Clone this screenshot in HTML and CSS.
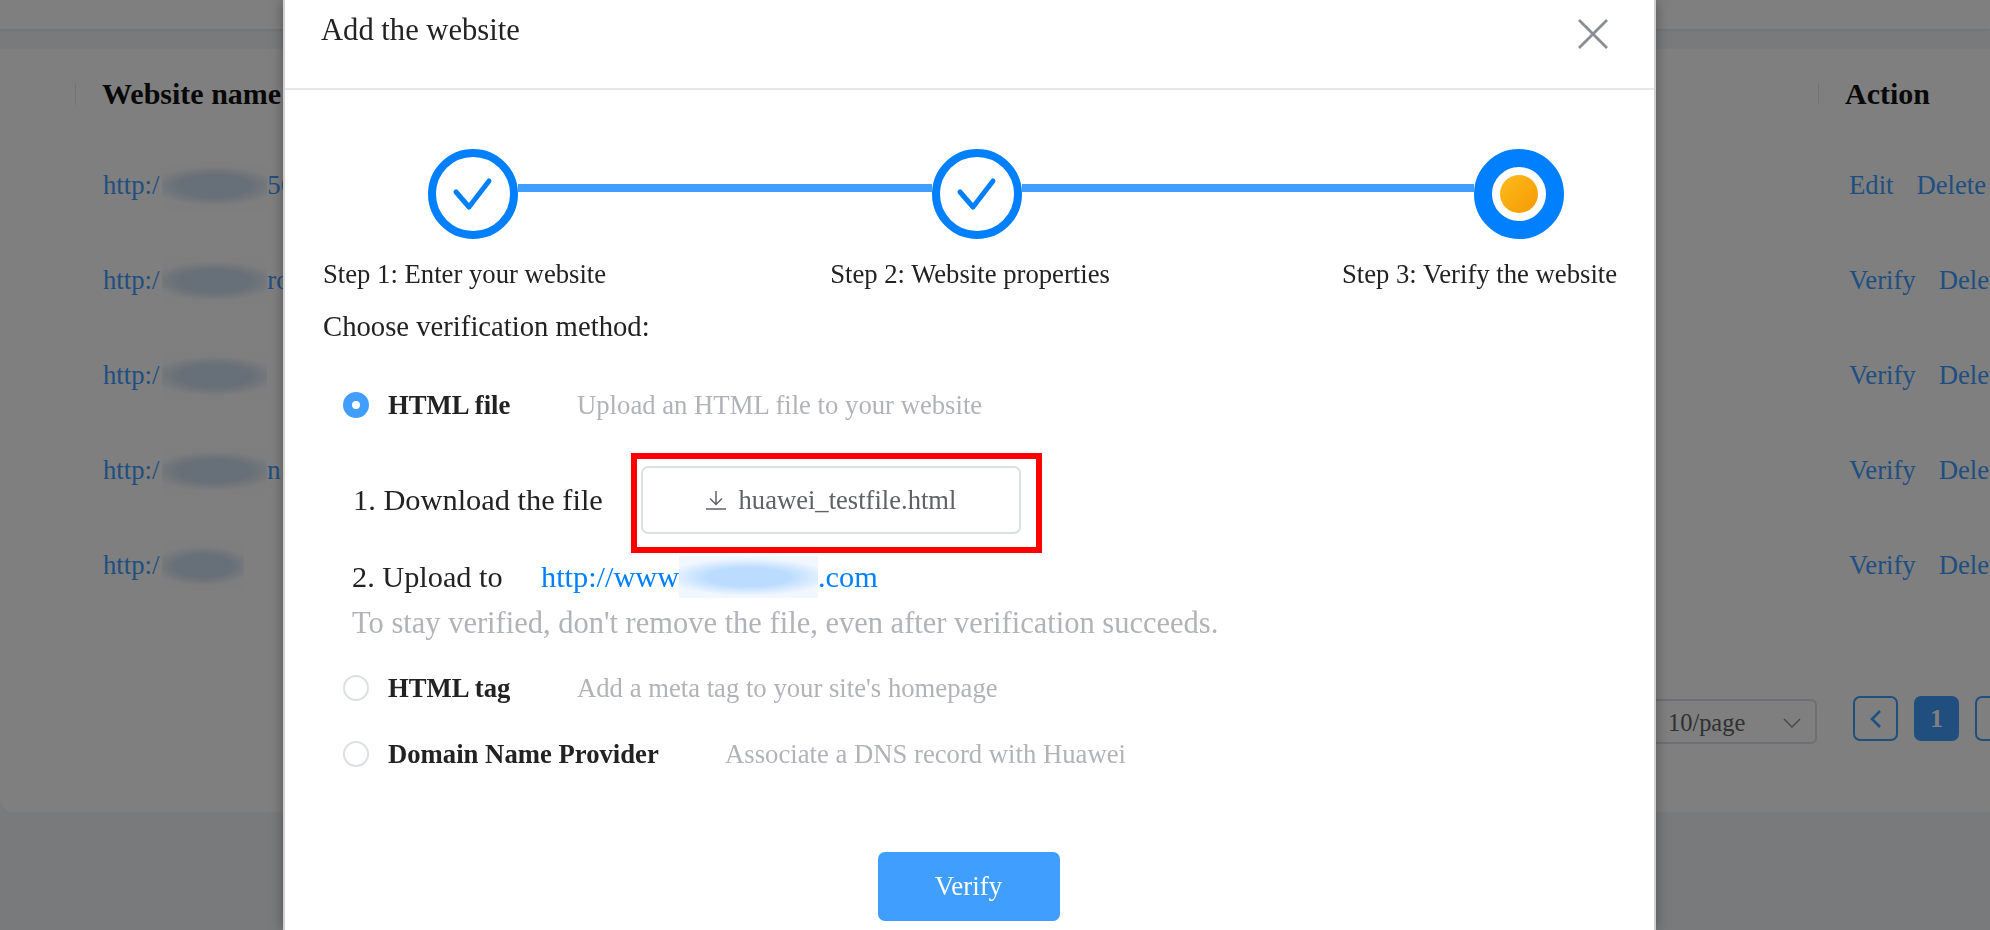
FILE: index.html
```html
<!DOCTYPE html>
<html lang="en">
<head>
    <meta charset="UTF-8">
    <title>Add the website</title>
    <link rel="stylesheet" href="styles.css">
</head>
<body>
    <div class="page">
        <div class="topbar"></div>
        <div class="card">
            <div class="table-head">
                <div class="th th-name">Website name</div>
                <div class="th th-action">Action</div>
            </div>
            <div class="row">
                <div class="site"><a>http:/</a><span class="mask"></span><a>56</a></div>
                <div class="actions"><a>Edit</a><a>Delete</a></div>
            </div>
            <div class="row">
                <div class="site"><a>http:/</a><span class="mask"></span><a>ro</a></div>
                <div class="actions"><a>Verify</a><a>Delete</a></div>
            </div>
            <div class="row">
                <div class="site"><a>http:/</a><span class="mask"></span></div>
                <div class="actions"><a>Verify</a><a>Delete</a></div>
            </div>
            <div class="row">
                <div class="site"><a>http:/</a><span class="mask"></span><a>n</a></div>
                <div class="actions"><a>Verify</a><a>Delete</a></div>
            </div>
            <div class="row">
                <div class="site"><a>http:/</a><span class="mask mask-short"></span></div>
                <div class="actions"><a>Verify</a><a>Delete</a></div>
            </div>
            <div class="pager">
                <div class="page-size">
                    <span>10/page</span>
                    <svg width="18" height="10" viewBox="0 0 18 10"><path d="M1 1l8 8 8-8" fill="none" stroke="#909399" stroke-width="1.5"/></svg>
                </div>
                <button class="page-btn page-prev">
                    <svg width="12" height="20" viewBox="0 0 12 20"><path d="M10 2L2 10l8 8" fill="none" stroke="#409eff" stroke-width="2.5"/></svg>
                </button>
                <button class="page-btn page-on">1</button>
                <button class="page-btn">2</button>
            </div>
        </div>
    </div>

    <div class="overlay"></div>

    <div class="modal">
        <div class="modal-head">
            <span class="modal-title">Add the website</span>
            <svg class="modal-close" width="30" height="30" viewBox="0 0 30 30"><path d="M1 1l28 28M29 1L1 29" fill="none" stroke="#8a8d91" stroke-width="2.800"/></svg>
        </div>
        <div class="modal-body">
            <div class="stepper">
                <div class="step-dot">
                    <svg width="42" height="34" viewBox="0 0 42 34"><path d="M4 15l13 15L37 4" fill="none" stroke="#0080ff" stroke-width="5" stroke-linecap="round" stroke-linejoin="round"/></svg>
                </div>
                <div class="step-line step-line-a"></div>
                <div class="step-dot">
                    <svg width="42" height="34" viewBox="0 0 42 34"><path d="M4 15l13 15L37 4" fill="none" stroke="#0080ff" stroke-width="5" stroke-linecap="round" stroke-linejoin="round"/></svg>
                </div>
                <div class="step-line step-line-b"></div>
                <div class="step-dot step-now"><span class="step-core"></span></div>
            </div>
            <div class="step-labels">
                <span class="label-1">Step 1: Enter your website</span>
                <span class="label-2">Step 2: Website properties</span>
                <span class="label-3">Step 3: Verify the website</span>
            </div>
            <div class="choose">Choose verification method:</div>

            <div class="option option-first">
                <span class="radio radio-on"></span>
                <b class="option-name">HTML file</b>
                <span class="option-desc">Upload an HTML file to your website</span>
            </div>
            <div class="download-row">
                <span class="download-label">1. Download the file</span>
                <div class="redbox">
                    <button class="download-btn">
                        <svg width="20" height="20" viewBox="0 0 20 20"><path d="M10 1v13M4 8.500l6 6 6-6M0 19h20" fill="none" stroke="#606266" stroke-width="1.500"/></svg>
                        <span>huawei_testfile.html</span>
                    </button>
                </div>
            </div>
            <div class="upload-row">
                <span class="upload-label">2. Upload to</span>
                <a class="upload-link">http://www<span class="mask-light"></span>.com</a>
            </div>
            <div class="hint">To stay verified, don't remove the file, even after verification succeeds.</div>
            <div class="option option-tag">
                <span class="radio"></span>
                <b class="option-name">HTML tag</b>
                <span class="option-desc">Add a meta tag to your site's homepage</span>
            </div>
            <div class="option option-dns">
                <span class="radio"></span>
                <b class="option-name name-dns">Domain Name Provider</b>
                <span class="option-desc">Associate a DNS record with Huawei</span>
            </div>
            <div class="modal-foot">
                <button class="verify-btn">Verify</button>
            </div>
        </div>
    </div>
</body>
</html>
```

FILE: styles.css
```css
* {
    box-sizing: border-box;
}
html, body {
    margin: 0;
    height: 930px;
    overflow: hidden;
}
body {
    font-family: "Liberation Serif", "Times New Roman", serif;
    color: #303133;
}
button {
    font-family: inherit;
}

/* page behind the dialog */
.page {
    height: 930px;
    background: #f2f4f8;
}
.topbar {
    height: 29px;
    background: #fff;
    box-shadow: 0 1px 3px rgba(0, 0, 0, 0.08);
}
.card {
    margin-top: 20px;
    height: 763px;
    background: #fff;
    border-radius: 0 0 0 14px;
    overflow: hidden;
}
.table-head {
    display: flex;
    height: 89px;
    align-items: center;
    padding-top: 1px;
}
.th {
    font-size: 30px;
    font-weight: bold;
    color: #111;
    border-left: 1px solid #e6e6e6;
    line-height: 22px;
    white-space: nowrap;
}
.th-name {
    margin-left: 75px;
    padding-left: 26px;
    width: 1743px;
    flex: none;
}
.th-action {
    padding-left: 26px;
    flex: none;
}
.row {
    display: flex;
    height: 95px;
    align-items: center;
    font-size: 26.700px;
    color: #409eff;
}
.site {
    flex: none;
    width: 1849px;
    padding-left: 103px;
    display: flex;
    align-items: center;
    white-space: nowrap;
}
.mask {
    display: block;
    flex: none;
    width: 105px;
    height: 48px;
    margin-left: 3px;
    background: radial-gradient(ellipse 62% 42% at 50% 50%, #cfdff0 55%, #fdfdfe);
}
.mask-short {
    width: 82px;
}
.actions {
    flex: none;
    display: flex;
    gap: 23px;
    white-space: nowrap;
}
.pager {
    display: flex;
    align-items: center;
    margin-top: 80px;
    padding-left: 1600px;
}
.page-size {
    width: 217px;
    height: 45px;
    border: 2px solid #dcdfe6;
    border-radius: 6px;
    display: flex;
    align-items: center;
    justify-content: space-between;
    padding: 2px 14px 0 66px;
    font-size: 24.400px;
    color: #606266;
    margin-top: 6px;
    flex: none;
}
.page-btn {
    flex: none;
    width: 45px;
    height: 45px;
    margin-left: 16px;
    border: 2px solid #409eff;
    border-radius: 7px;
    background: #fff;
    color: #409eff;
    font-size: 26px;
    font-weight: bold;
    padding: 0;
    display: flex;
    align-items: center;
    justify-content: center;
}
.page-prev {
    margin-left: 36px;
}
.page-on {
    background: #409eff;
    color: #fff;
}

.overlay {
    position: fixed;
    inset: 0;
    background: rgba(0, 0, 0, 0.5);
}

/* dialog */
.modal {
    position: absolute;
    left: 283px;
    top: 0;
    width: 1373px;
    height: 930px;
    background: #fff;
    border-left: 2px solid #d0d0d0;
    border-right: 2px solid #d0d0d0;
    box-shadow: 0 0 12px rgba(0, 0, 0, 0.35);
    overflow: hidden;
}
.modal-head {
    height: 90px;
    border-bottom: 2px solid #e8e8e8;
    padding: 0 46px 0 36px;
    display: flex;
    justify-content: space-between;
    align-items: flex-start;
}
.modal-title {
    font-size: 30.600px;
    line-height: 60px;
    color: #222;
}
.modal-close {
    margin-top: 19px;
}
.stepper {
    display: flex;
    margin: 59px 0 0 143px;
}
.step-dot {
    flex: none;
    width: 90px;
    height: 90px;
    border: 8px solid #0080ff;
    border-radius: 50%;
    display: flex;
    align-items: center;
    justify-content: center;
}
.step-now {
    border-width: 18px;
}
.step-core {
    width: 38px;
    height: 38px;
    border-radius: 50%;
    background: linear-gradient(135deg, #fdbb1e, #f59a00);
}
.step-line {
    height: 8px;
    margin-top: 35px;
    background: #409eff;
}
.step-line-a {
    width: 414px;
}
.step-line-b {
    width: 452px;
}
.step-labels {
    display: flex;
    margin: 17px 0 0 38px;
    font-size: 26.700px;
    line-height: 36px;
    color: #222;
    white-space: nowrap;
}
.label-2 {
    margin-left: 224px;
}
.label-3 {
    margin-left: 232px;
}
.choose {
    margin: 16px 0 0 38px;
    font-size: 28.700px;
    line-height: 36px;
    color: #222;
}
.option {
    display: flex;
    align-items: center;
    height: 36px;
    padding-left: 58px;
    font-size: 26.700px;
    white-space: nowrap;
}
.option-first {
    margin-top: 43px;
}
.option-tag {
    margin-top: 24px;
}
.option-dns {
    margin-top: 30px;
}
.radio {
    flex: none;
    width: 26px;
    height: 26px;
    border: 2px solid #dcdfe6;
    border-radius: 50%;
    background: #fff;
}
.radio-on {
    border: 9px solid #409eff;
}
.option-name {
    width: 189px;
    margin-left: 19px;
    color: #222;
}
.name-dns {
    width: 337px;
}
.option-desc {
    color: #b1b3b8;
}
.download-row {
    display: flex;
    align-items: center;
    margin: 30px 0 0 68px;
}
.download-label {
    font-size: 30.400px;
    color: #222;
    width: 278px;
    flex: none;
    padding-bottom: 5px;
}
.redbox {
    flex: none;
    width: 411px;
    height: 100px;
    border: 6px solid #f00;
    padding: 7px 0 0 4px;
}
.download-btn {
    width: 380px;
    height: 68px;
    border: 2px solid #dcdfe6;
    border-radius: 7px;
    background: #fff;
    color: #606266;
    font-size: 26.600px;
    display: flex;
    align-items: center;
    justify-content: center;
    gap: 13px;
    padding: 0;
}
.upload-row {
    display: flex;
    align-items: center;
    margin: 1px 0 0 67px;
    height: 46px;
    font-size: 30.300px;
    white-space: nowrap;
}
.upload-label {
    width: 189px;
    color: #222;
}
.upload-link {
    color: #0080ff;
    display: flex;
    align-items: center;
}
.mask-light {
    display: block;
    width: 139px;
    height: 42px;
    margin-left: 0;
    background: radial-gradient(ellipse 60% 45% at 50% 50%, #bcdcff 50%, #f1f7ff);
}
.hint {
    margin: 0 0 0 67px;
    font-size: 30.500px;
    line-height: 46px;
    color: #b1b3b8;
    white-space: nowrap;
}
.modal-foot {
    display: flex;
    justify-content: center;
    margin-top: 80px;
}
.verify-btn {
    width: 182px;
    height: 69px;
    margin-right: 2px;
    border: 0;
    border-radius: 7px;
    background: #409eff;
    color: #fff;
    font-size: 27px;
}
```
